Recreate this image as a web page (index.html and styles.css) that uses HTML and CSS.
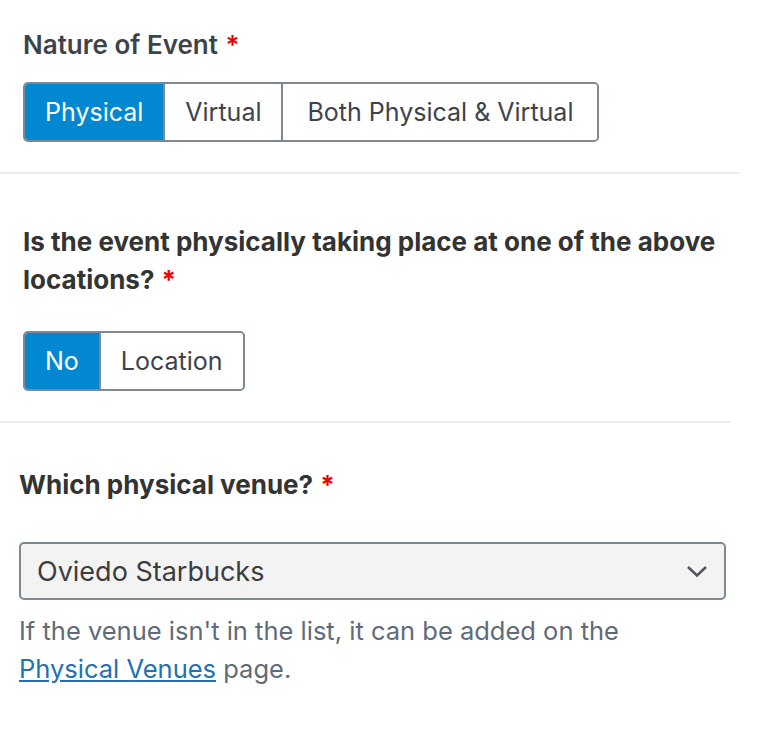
FILE: index.html
```html
<!DOCTYPE html>
<html lang="en">
<head>
  <meta charset="UTF-8" />
  <meta name="viewport" content="width=device-width, initial-scale=1.0"/>
  <title>Event Location</title>
  <link rel="stylesheet" href="styles.css">
</head>
<body>

  <!-- Nature of event -->
  <div class="field field-nature">
    <label class="field-label">Nature of Event <span class="req">*</span></label>
    <div class="btn-group">
      <button class="btn active">Physical</button>
      <button class="btn">Virtual</button>
      <button class="btn btn-wide">Both Physical &amp; Virtual</button>
    </div>
  </div>

  <!-- At one of the locations? -->
  <div class="field field-location">
    <label class="field-label strong">Is the event physically taking place at one of the above locations? <span class="req">*</span></label>
    <div class="btn-group">
      <button class="btn active">No</button>
      <button class="btn">Location</button>
    </div>
  </div>

  <!-- Venue select -->
  <div class="field field-venue">
    <label class="field-label strong">Which physical venue? <span class="req">*</span></label>
    <div class="select">
      <span>Oviedo Starbucks</span>
      <svg width="22" height="13" viewBox="0 0 22 13">
        <path d="M2 2 L11 10.5 L20 2" fill="none" stroke="#50575e" stroke-width="2.6"/>
      </svg>
    </div>
    <p class="help">If the venue isn't in the list, it can be added on the <a href="#">Physical Venues</a> page.</p>
  </div>

</body>
</html>
```

FILE: styles.css
```css
body {
  margin: 0;
  font-family: Inter, "Noto Sans", sans-serif;
  background: #fff;
  color: #3c434a;
}
.field {
  padding-left: 23px;
  border-bottom: 2px solid #ebebf0;
}
.field-nature {
  padding-top: 26px;
  padding-bottom: 30px;
  width: 717px;
}
.field-location {
  padding-top: 49px;
  padding-bottom: 30px;
  width: 707px;
}
.field-venue {
  padding-left: 19px;
  padding-top: 43px;
  border-bottom: none;
  width: 707px;
}
.field-label {
  display: block;
  font-size: 26px;
  font-weight: 600;
  line-height: 38px;
}
.field-label.strong {
  font-weight: 700;
  color: #333;
}
.req {
  color: #e00;
  margin-left: 1px;
}
.btn-group {
  display: inline-flex;
  margin-top: 18px;
  border: 2px solid #7e8993;
  border-radius: 5px;
  overflow: hidden;
}
.field-location .btn-group {
  margin-top: 32px;
}
.btn {
  font-family: inherit;
  font-size: 25px;
  color: #3c434a;
  background: #fff;
  border: none;
  border-left: 2px solid #7e8993;
  padding: 0 20px;
  height: 56px;
}
.btn:first-child {
  border-left: none;
}
.btn-wide {
  padding: 0 24px;
}
.btn.active {
  background: #0288d1;
  color: #fff;
}
.select {
  margin-top: 38px;
  height: 54px;
  border: 2px solid #7e8993;
  border-radius: 5px;
  background: #f3f3f3;
  display: flex;
  align-items: center;
  justify-content: space-between;
  padding: 0 16px 0 16px;
  font-size: 27px;
  color: #3c3c3c;
}
.help {
  margin: 12px 0 0;
  font-size: 25.5px;
  line-height: 38px;
  color: #5f6b7a;
}
.help a {
  color: #2271b1;
}
```
